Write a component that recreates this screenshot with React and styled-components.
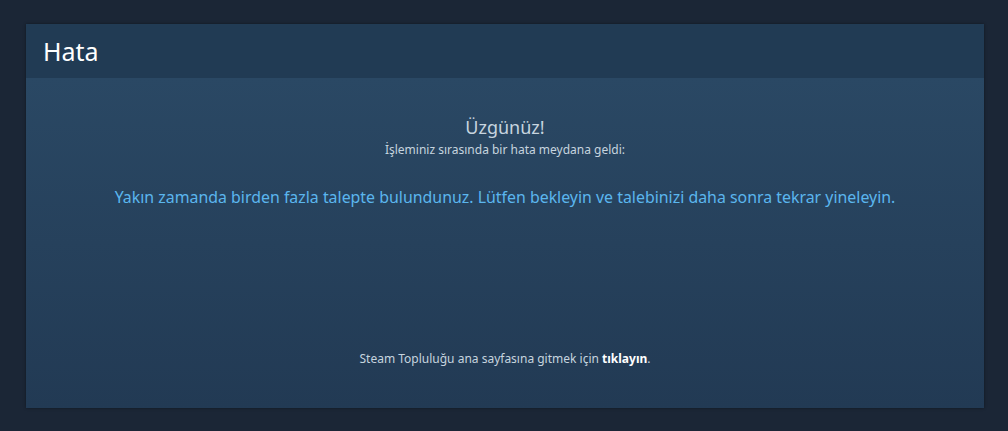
import * as React from "react";
import styled, { createGlobalStyle } from "styled-components";

const GlobalStyle = createGlobalStyle`
  html, body {
    margin: 0;
    padding: 0;
    background: #1b2636;
    height: 100%;
  }
  body {
    font-family: "Noto Sans", "Liberation Sans", Arial, sans-serif;
  }
`;

export default function App() {
  return (
    <>
      <GlobalStyle />
      <Page>
        <Panel>
          <Header>
            <Title>Hata</Title>
          </Header>
          <Body>
            <Sorry>Üzgünüz!</Sorry>
            <SubTitle>İşleminiz sırasında bir hata meydana geldi:</SubTitle>
            <ErrorText>
              Yakın zamanda birden fazla talepte bulundunuz. Lütfen bekleyin ve
              talebinizi daha sonra tekrar yineleyin.
            </ErrorText>
            <Spacer />
            <Footer>
              Steam Topluluğu ana sayfasına gitmek için <HomeLink href="#">tıklayın</HomeLink>.
            </Footer>
          </Body>
        </Panel>
      </Page>
    </>
  );
}

const Page = styled.div`
  padding: 24px 24px 23px 26px;
`;

const Panel = styled.div`
  display: flex;
  flex-direction: column;
  height: 384px;
  box-shadow: 0 0 3px rgba(0, 0, 0, 0.4);
`;

const Header = styled.div`
  background: #213b54;
  height: 54px;
  display: flex;
  align-items: center;
  padding: 0 17px;
`;

const Title = styled.h1`
  margin: 0;
  font-size: 25px;
  font-weight: normal;
  color: #ffffff;
`;

const Body = styled.div`
  flex: 1;
  display: flex;
  flex-direction: column;
  align-items: center;
  background: linear-gradient(to bottom, #2a4864 0%, #223a54 100%);
  padding: 37px 20px 41px;
`;

const Sorry = styled.div`
  font-size: 18px;
  color: #c6d4df;
  line-height: 24px;
  margin-bottom: 3px;
`;

const SubTitle = styled.div`
  font-size: 12px;
  color: #c6d4df;
  line-height: 16px;
`;

const ErrorText = styled.div`
  margin-top: 28px;
  font-size: 15.9px;
  color: #5bb6ee;
  line-height: 22px;
`;

const Spacer = styled.div`
  flex-grow: 1;
`;

const Footer = styled.div`
  font-size: 12px;
  color: #c6d4df;
  line-height: 16px;
`;

const HomeLink = styled.a`
  color: #ffffff;
  font-weight: bold;
  text-decoration: none;
`;
